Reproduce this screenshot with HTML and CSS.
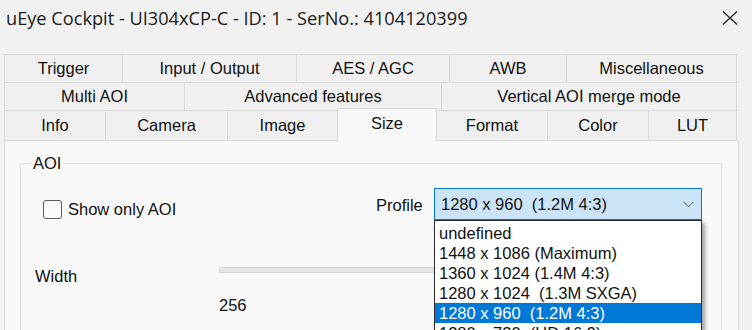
FILE: index.html
```html
<!DOCTYPE html>
<html>
<head>
<meta charset="utf-8">
<link rel="stylesheet" href="styles.css">
</head>
<body>
<div class="window">
  <div class="titlebar">
    <span class="title">uEye Cockpit - UI304xCP-C - ID: 1 - SerNo.: 4104120399</span>
    <svg class="close" width="16" height="14" viewBox="0 0 16 14"><path d="M1 0.5 L15 13.5 M15 0.5 L1 13.5" stroke="#1b1b1b" stroke-width="1.2" fill="none"/></svg>
  </div>
  <div class="tabs">
    <div class="tabrow">
      <div class="tab w118">Trigger</div>
      <div class="tab w174">Input / Output</div>
      <div class="tab w153">AES / AGC</div>
      <div class="tab w117">AWB</div>
      <div class="tab w171">Miscellaneous</div>
    </div>
    <div class="tabrow">
      <div class="tab w180">Multi AOI</div>
      <div class="tab w257">Advanced features</div>
      <div class="tab w296">Vertical AOI merge mode</div>
    </div>
    <div class="tabrow last">
      <div class="tab w101">Info</div>
      <div class="tab w122">Camera</div>
      <div class="tab w110">Image</div>
      <div class="tab selected">Size</div>
      <div class="tab w111">Format</div>
      <div class="tab w101">Color</div>
      <div class="tab w89">LUT</div>
    </div>
  </div>
  <div class="panel">
    <fieldset class="group">
      <legend>AOI</legend>
      <div class="form">
        <label class="check"><span class="box"></span><span>Show only AOI</span></label>
        <span class="profile-label">Profile</span>
        <div class="combo">
          <span class="combo-value">1280 x 960  (1.2M 4:3)</span>
          <svg class="chev" width="11" height="7" viewBox="0 0 11 7"><path d="M0.5 0.8 L5.5 5.8 L10.5 0.8" stroke="#5a5a5a" stroke-width="1" fill="none"/></svg>
          <ul class="list">
            <li>undefined</li>
            <li>1448 x 1086 (Maximum)</li>
            <li>1360 x 1024 (1.4M 4:3)</li>
            <li>1280 x 1024  (1.3M SXGA)</li>
            <li class="sel">1280 x 960  (1.2M 4:3)</li>
            <li>1280 x 720  (HD 16:9)</li>
          </ul>
        </div>
        <span class="width-label">Width</span>
        <div class="track"></div>
        <span class="value">256</span>
      </div>
    </fieldset>
  </div>
</div>
</body>
</html>
```

FILE: styles.css
```css
html, body {
  margin: 0;
  padding: 0;
  width: 752px;
  height: 330px;
  overflow: hidden;
  background: #f1f1f1;
}

.window {
  font-family: "Liberation Sans", Arial, sans-serif;
  font-size: 16.5px;
  color: #111;
}

.titlebar {
  height: 35px;
  display: flex;
  align-items: center;
  padding: 0 14px 0 6px;
}

.title {
  flex: 1;
  font-family: "Open Sans", "Noto Sans", sans-serif;
  font-size: 18.2px;
  color: #1a1a1a;
  white-space: pre;
}

.close {
  display: block;
}

.tabs {
  padding-top: 19px;
  margin: 0 14px 0 4px;
}

.tabrow {
  display: flex;
  height: 28px;
  box-sizing: border-box;
  border-top: 1px solid #d9d9d9;
}

.tabrow.last {
  height: 30px;
}

.tab {
  box-sizing: border-box;
  border-left: 1px solid #d9d9d9;
  background: #f0f0f0;
  display: flex;
  align-items: center;
  justify-content: center;
  white-space: pre;
}

.tab:last-child {
  border-right: 1px solid #d9d9d9;
}

.w89 { width: 89px; }
.w101 { width: 101px; }
.w110 { width: 110px; }
.w111 { width: 111px; }
.w117 { width: 117px; }
.w118 { width: 118px; }
.w122 { width: 122px; }
.w153 { width: 153px; }
.w171 { width: 171px; }
.w174 { width: 174px; }
.w180 { width: 180px; }
.w257 { width: 257px; }
.w296 { width: 296px; }

.tab.selected {
  position: relative;
  z-index: 2;
  width: 100px;
  margin-right: -1px;
  height: 34px;
  margin-top: -3px;
  align-self: flex-start;
  padding-bottom: 4px;
  background: #f9f9f9;
  border: 1px solid #d9d9d9;
  border-bottom: none;
}

.panel {
  margin: 0 13px 0 4px;
  height: 200px;
  box-sizing: border-box;
  border: 1px solid #d9d9d9;
  background: #f9f9f9;
  padding-top: 13px;
}

.group {
  margin: 0 16px 0 15px;
  padding: 0 0 40px 0;
  border: 1px solid #dcdcdc;
  min-width: 0;
}

.group legend {
  margin-left: 10px;
  padding: 0 2px;
  line-height: 18px;
  font-size: 16.5px;
}

.form {
  margin-top: 16px;
  display: grid;
  grid-template-columns: 198px 157px 58px 268px;
  grid-template-rows: 32px auto auto;
}

.check {
  grid-column: 1 / 3;
  grid-row: 1;
  align-self: start;
  margin: 11px 0 0 22px;
  display: flex;
  align-items: center;
  gap: 6px;
  line-height: 20px;
}

.box {
  width: 19px;
  height: 19px;
  box-sizing: border-box;
  border: 1px solid #5c5c5c;
  border-radius: 3px;
  background: #fbfbfb;
}

.profile-label {
  grid-column: 3;
  grid-row: 1;
  align-self: center;
  line-height: 18px;
  margin-top: 2px;
}

.combo {
  grid-column: 4;
  grid-row: 1;
  position: relative;
  box-sizing: border-box;
  height: 32px;
  border: 1px solid #0078d7;
  background: #cce4f7;
  display: flex;
  align-items: center;
  padding: 0 7px 0 6px;
}

.combo-value {
  flex: 1;
  white-space: pre;
  margin-top: 1px;
}

.chev {
  display: block;
}

.list {
  position: absolute;
  z-index: 5;
  top: calc(100% + 1px);
  left: -1px;
  width: 268px;
  box-sizing: border-box;
  margin: 0;
  padding: 2px 0 0;
  list-style: none;
  background: #fff;
  border: 1px solid #2b2b2b;
  box-shadow: 3px 3px 4px rgba(0, 0, 0, 0.35);
}

.list li {
  height: 20px;
  line-height: 20px;
  padding-left: 4px;
  white-space: pre;
}

.list li.sel {
  background: #0078d7;
  color: #fff;
}

.width-label {
  grid-column: 1;
  grid-row: 2;
  padding-left: 14px;
  margin-top: 47px;
  line-height: 18px;
}

.track {
  grid-column: 2 / 5;
  grid-row: 2;
  margin-top: 47px;
  height: 6px;
  box-sizing: border-box;
  border: 1px solid #d8d8d8;
  background: #e6e6e6;
}

.value {
  grid-column: 2;
  grid-row: 3;
  margin-top: 11px;
  line-height: 18px;
}
```
